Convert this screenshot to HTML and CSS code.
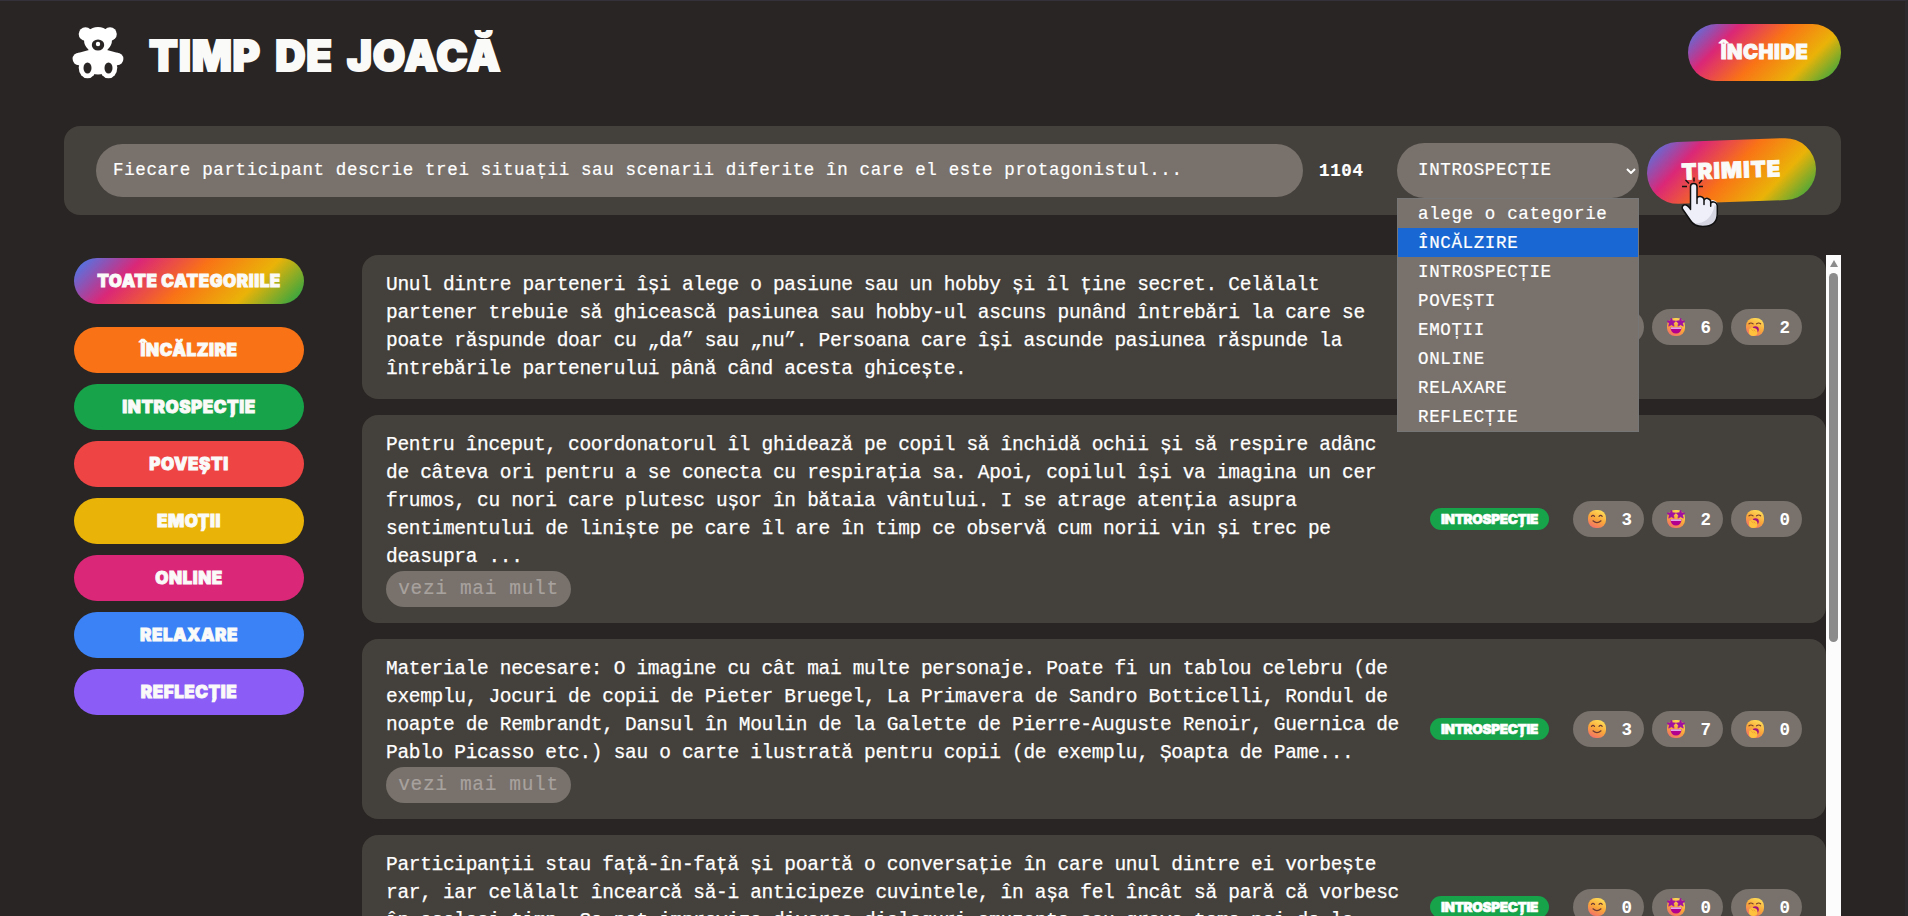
FILE: index.html
```html
<!DOCTYPE html>
<html lang="ro">
<head>
<meta charset="utf-8">
<title>Timp de joacă</title>
<link rel="stylesheet" href="styles.css">
</head>
<body>
<svg class="defs" width="0" height="0" aria-hidden="true">
  <defs>
    <linearGradient id="face" x1="0.8" y1="0" x2="0.3" y2="1">
      <stop offset="0" stop-color="#ffe25a"/><stop offset="0.55" stop-color="#f9a63a"/><stop offset="1" stop-color="#f2706a"/>
    </linearGradient>
    <symbol id="smile" viewBox="0 0 18 18">
      <rect width="18" height="18" rx="8" fill="url(#face)"/>
      <path d="M3.500 6.400q1.500-2 3 0M11 6.400q1.600-2 3.200 0M5 10.800q4 3.600 8 0" fill="none" stroke="#6b3a35" stroke-width="1.200" stroke-linecap="round"/>
    </symbol>
    <symbol id="star" viewBox="0 0 18 18">
      <rect width="18" height="18" rx="8" fill="url(#face)"/>
      <path d="M4.400 0l1.300 2.700 3 .4-2.200 2.100.6 3-2.700-1.400-2.700 1.400.5-3L0 3.100l3-.4zM13.600 0l1.300 2.700 3 .4-2.200 2.100.6 3-2.700-1.400-2.700 1.400.5-3-2.200-2.100 3-.4z" fill="#a012a0" stroke="#a012a0" stroke-width=".6"/>
      <path d="M3.400 9.400h11.200q-.6 6-5.600 6t-5.600-6z" fill="#b3008f"/>
      <path d="M3.800 9.400h10.400v1.500H3.800z" fill="#e6b8f0"/>
    </symbol>
    <symbol id="yawn" viewBox="0 0 18 18">
      <rect width="18" height="18" rx="8" fill="url(#face)"/>
      <path d="M3 5.800q1.800-1.600 4 0M10.600 5.800q2.200-1.600 4 0" fill="none" stroke="#7a432c" stroke-width="1.200" stroke-linecap="round"/>
      <circle cx="9.500" cy="11.500" r="3.300" fill="#a3137f"/>
      <ellipse cx="7.200" cy="14" rx="4.300" ry="3.900" fill="#ffc23d"/>
      <path d="M4 11.500l2.500 2M6.200 10.200l2.300 2.600" stroke="#ffc23d" stroke-width="1.800" stroke-linecap="round"/>
      <path d="M5.400 11.200l2 2M7.800 11.600l1.600 1.800" stroke="#e0862e" stroke-width=".6"/>
    </symbol>
  </defs>
</svg>
<div class="page">
  <header class="header">
    <svg class="bear" viewBox="0 0 52 52">
      <g fill="#fff">
        <circle cx="13.500" cy="7" r="6.800"/><circle cx="38" cy="7" r="6.800"/>
        <ellipse cx="26" cy="13" rx="14" ry="13"/>
        <ellipse cx="26" cy="35" rx="15" ry="12.500"/>
        <circle cx="6.800" cy="32" r="6.200"/><circle cx="45.200" cy="32" r="6.200"/>
        <path d="M6 26L17 23h18l11 3v12H6z"/>
        <ellipse cx="15.500" cy="40.500" rx="8.800" ry="10.800"/><ellipse cx="36.500" cy="40.500" rx="8.800" ry="10.800"/>
      </g>
      <g fill="#292524">
        <ellipse cx="26" cy="18" rx="6.200" ry="5.600"/>
        <ellipse cx="15.500" cy="41" rx="4" ry="5.600"/><ellipse cx="36.500" cy="41" rx="4" ry="5.600"/>
      </g>
      <circle cx="26" cy="17" r="2.200" fill="#fff"/>
    </svg>
    <h1 class="title">TIMP DE JOACĂ</h1>
    <button class="rainbow close"><span class="fat">ÎNCHIDE</span></button>
  </header>

  <form class="form">
    <div class="input">Fiecare participant descrie trei situații sau scenarii diferite în care el este protagonistul...</div>
    <strong class="count">1104</strong>
    <div class="select">INTROSPECȚIE
      <svg class="chev" viewBox="0 0 10 6"><path d="M1 1l4 4 4-4" fill="none" stroke="#fff" stroke-width="2"/></svg>
      <ul class="menu">
        <li>alege o categorie</li><li class="active">ÎNCĂLZIRE</li><li>INTROSPECȚIE</li><li>POVEȘTI</li><li>EMOȚII</li><li>ONLINE</li><li>RELAXARE</li><li>REFLECȚIE</li>
      </ul>
    </div>
    <div class="send-wrap">
      <button type="button" class="rainbow send"><span class="fat">TRIMITE</span></button>
      <svg class="cursor" viewBox="0 0 38 50">
        <path d="M8 6L4.500 2.500M13 4V0M18 6l3-3.500M6 9H1M22 9h-4" stroke="#111" stroke-width="1.400" fill="none"/>
        <path d="M9.500 29V9q0-3 3.200-3T16 9v12q.5-2.500 3.500-2t3.500 2.500q1-1.800 3.700-1t3 2.800q1-1.200 3.600-.4t3 3.600V36q0 13-14.500 13Q13 49 9.500 43L1.500 31.500q-1-3 1.500-4t6.500 4z" fill="#efeffa"/>
        <path d="M36.300 28v8q0 13-14.500 13-6 0-9-3Q30 46 33.500 28z" fill="#d5d6e2"/>
        <path d="M9.500 32V9q0-3 3.200-3T16 9v17-5q.5-2.500 3.500-2t3.500 3v5-4q1-2.800 3.700-2t3 2.800v5-3q1-2 3.600-1.200t3 3.600V36q0 13-14.500 13Q13 49 9.500 43L1.500 31.500q-1-3 1.500-4t6.500 4z" fill="none" stroke="#111" stroke-width="1.500" stroke-linejoin="round"/>
      </svg>
    </div>
  </form>

  <div class="main">
    <nav class="side">
      <button class="cat rainbow all"><span class="fat">TOATE CATEGORIILE</span></button>
      <button class="cat orange"><span class="fat">ÎNCĂLZIRE</span></button>
      <button class="cat green"><span class="fat">INTROSPECȚIE</span></button>
      <button class="cat red"><span class="fat">POVEȘTI</span></button>
      <button class="cat yellow"><span class="fat">EMOȚII</span></button>
      <button class="cat pink"><span class="fat">ONLINE</span></button>
      <button class="cat blue"><span class="fat">RELAXARE</span></button>
      <button class="cat violet"><span class="fat">REFLECȚIE</span></button>
    </nav>
    <div class="list">
      <article class="card">
        <div class="text">Unul dintre parteneri își alege o pasiune sau un hobby și îl ține secret. Celălalt<br>partener trebuie să ghicească pasiunea sau hobby-ul ascuns punând întrebări la care se<br>poate răspunde doar cu „da” sau „nu”. Persoana care își ascunde pasiunea răspunde la<br>întrebările partenerului până când acesta ghicește.</div>
        <div class="reacts"><span class="pill"><svg><use href="#smile"/></svg></span><span class="pill"><svg><use href="#star"/></svg><b>6</b></span><span class="pill"><svg><use href="#yawn"/></svg><b>2</b></span></div>
      </article>
      <article class="card">
        <div class="text">Pentru început, coordonatorul îl ghidează pe copil să închidă ochii și să respire adânc<br>de câteva ori pentru a se conecta cu respirația sa. Apoi, copilul își va imagina un cer<br>frumos, cu nori care plutesc ușor în bătaia vântului. I se atrage atenția asupra<br>sentimentului de liniște pe care îl are în timp ce observă cum norii vin și trec pe<br>deasupra ...<button class="more">vezi mai mult</button></div>
        <span class="badge">INTROSPECȚIE</span>
        <div class="reacts"><span class="pill"><svg><use href="#smile"/></svg><b>3</b></span><span class="pill"><svg><use href="#star"/></svg><b>2</b></span><span class="pill"><svg><use href="#yawn"/></svg><b>0</b></span></div>
      </article>
      <article class="card">
        <div class="text">Materiale necesare: O imagine cu cât mai multe personaje. Poate fi un tablou celebru (de<br>exemplu, Jocuri de copii de Pieter Bruegel, La Primavera de Sandro Botticelli, Rondul de<br>noapte de Rembrandt, Dansul în Moulin de la Galette de Pierre-Auguste Renoir, Guernica de<br>Pablo Picasso etc.) sau o carte ilustrată pentru copii (de exemplu, Șoapta de Pame...<button class="more">vezi mai mult</button></div>
        <span class="badge">INTROSPECȚIE</span>
        <div class="reacts"><span class="pill"><svg><use href="#smile"/></svg><b>3</b></span><span class="pill"><svg><use href="#star"/></svg><b>7</b></span><span class="pill"><svg><use href="#yawn"/></svg><b>0</b></span></div>
      </article>
      <article class="card last">
        <div class="text">Participanții stau față-în-față și poartă o conversație în care unul dintre ei vorbește<br>rar, iar celălalt încearcă să-i anticipeze cuvintele, în așa fel încât să pară că vorbesc<br>în același timp. Se pot improviza diverse dialoguri amuzante sau grave teme noi de la</div>
        <span class="badge">INTROSPECȚIE</span>
        <div class="reacts"><span class="pill"><svg><use href="#smile"/></svg><b>0</b></span><span class="pill"><svg><use href="#star"/></svg><b>0</b></span><span class="pill"><svg><use href="#yawn"/></svg><b>0</b></span></div>
      </article>
    </div>
    <div class="scroll"><i class="up"></i><i class="thumb"></i></div>
  </div>
</div>
</body>
</html>
```
FILE: styles.css
```css
* { box-sizing: border-box; }
html { height: 916px; overflow: hidden; }
body {
  margin: 0;
  height: 916px;
  overflow: hidden;
  background: #292524;
  border-top: 1px solid #35313a;
  border-right: 3px solid #2c2a2c;
  color: #fff;
  font-family: "Liberation Mono", monospace;
}
.defs { display: block; }
button { border: 0; padding: 0; color: #fafaf9; font: inherit; }
.page { padding: 0 64px 0 64px; }
.header { display: flex; align-items: center; height: 125px; padding: 0 0 20px 8px; }
.bear { width: 52px; height: 52px; margin-top: -2px; }
.title, .fat, .badge { font-family: Inter, "Noto Sans", sans-serif; font-weight: 900; white-space: nowrap; }
.title { margin: 4px 0 0 25px; font-size: 42px; letter-spacing: .8px; word-spacing: 5px; color: #fafaf9; -webkit-text-stroke: 2px #fafaf9; }
.rainbow { background: linear-gradient(135deg, #3b82f6, #db2777, #f97316, #eab308, #16a34a); }
.fat { letter-spacing: .55px; -webkit-text-stroke: .9px #fafaf9; }
.close { margin: -2px 0 0 auto; width: 153px; height: 57px; border-radius: 29px; font-size: 20px; }
.form { position: relative; z-index: 2; display: flex; align-items: center; height: 89px; padding-left: 32px; border-radius: 16px; background: #44403b; font-size: 17.5px; letter-spacing: .64px; -webkit-text-stroke: .2px #fff; }
.input { width: 1207px; height: 53px; line-height: 53px; padding-left: 17px; border-radius: 27px; background: #78716c; white-space: nowrap; }
.count { width: 94px; padding-left: 16px; }
.select { position: relative; width: 242px; height: 55px; line-height: 55px; padding-left: 21px; border-radius: 28px; background: #78716c; }
.chev { position: absolute; right: 3px; top: 25px; width: 10px; height: 6px; }
.menu { position: absolute; left: 0; top: 55px; width: 242px; height: 234px; margin: 0; padding: 0; list-style: none; border: 1px solid #767676; background: #78716c; }
.menu li { height: 29px; line-height: 30px; padding-left: 20px; }
.menu .active { background: #1967d2; }
.send-wrap { position: relative; margin-left: 8px; width: 169px; }
.send { display: block; width: 169px; height: 62px; border-radius: 31px; transform: rotate(-2deg); font-size: 22px; }
.send .fat { letter-spacing: 1.1px; }
.cursor { position: absolute; left: 34px; top: 37px; width: 38px; height: 51px; }
.main { display: flex; margin-top: 40px; height: 661px; }
.side { display: flex; flex-direction: column; gap: 11px; width: 298px; padding: 3px 0 0 10px; }
.cat { flex: none; width: 230px; height: 46px; border-radius: 23px; font-size: 17px; }
.all { margin-bottom: 12px; }
.orange { background: #f97316; }
.green { background: #16a34a; }
.red { background: #ef4444; }
.yellow { background: #eab308; }
.pink { background: #db2777; }
.blue { background: #3b82f6; }
.violet { background: #8b5cf6; }
.list { display: flex; flex-direction: column; gap: 16px; width: 1464px; height: 661px; overflow: hidden; }
.card { flex: none; display: flex; align-items: center; padding: 16px 24px; border-radius: 16px; background: #44403b; }
.last { height: 144px; }
.last .text { align-self: flex-start; }
.text { flex: 1; font-size: 19.5px; letter-spacing: -.32px; line-height: 28px; white-space: nowrap; -webkit-text-stroke: .25px #fff; }
.more { display: block; width: 185px; height: 36px; border-radius: 18px; background: #78716c; color: #a8a29e; font-size: 19.5px; letter-spacing: .65px; -webkit-text-stroke: .2px #a8a29e; }
.badge { width: 119px; height: 22px; line-height: 22px; margin-right: 24px; border-radius: 11px; background: #16a34a; text-align: center; font-size: 13.500px; letter-spacing: -.3px; -webkit-text-stroke: .6px #fff; }
.reacts { display: flex; gap: 8px; }
.pill { display: flex; align-items: center; justify-content: space-between; width: 71px; height: 36px; padding: 0 12px 0 15px; border-radius: 18px; background: #78716c; font-size: 17.5px; }
.pill svg { width: 18px; height: 18px; }
.pill b { padding-top: 2px; }
.scroll { display: flex; flex-direction: column; align-items: center; width: 15px; padding-top: 5px; background: #fcfcfc; }
.up { border: 4.500px solid transparent; border-top: 0; border-bottom: 7px solid #8b8b8b; }
.thumb { margin-top: 6px; width: 9px; height: 369px; border-radius: 5px; background: #8b8b8b; }
```
